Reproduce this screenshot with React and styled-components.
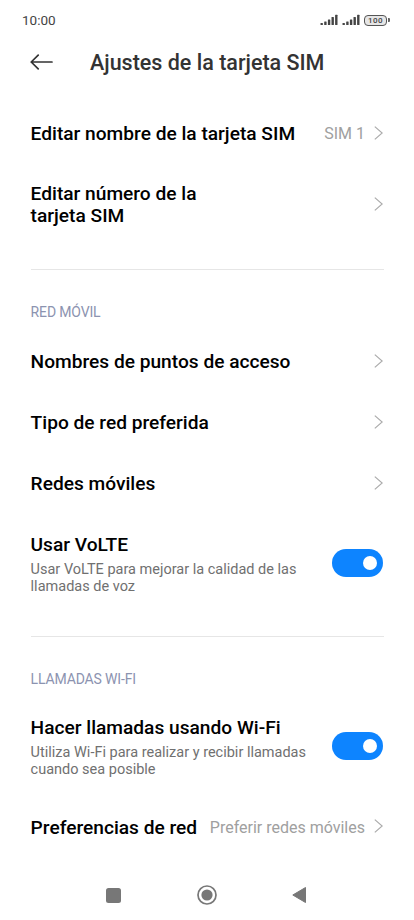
import React from 'react';
import styled, { createGlobalStyle } from 'styled-components';

const GlobalStyle = createGlobalStyle`
  * {
    box-sizing: border-box;
  }

  body {
    margin: 0;
    background: #fff;
    font-family: Roboto, sans-serif;
    color: #000;
  }
`;

const Screen = styled.div`
  width: 414px;
  height: 920px;
  overflow: hidden;
  display: flex;
  flex-direction: column;
`;

const StatusBar = styled.div`
  height: 40px;
  padding: 0 24px 0 22px;
  display: flex;
  align-items: center;
  justify-content: space-between;

  font-size: 13.5px;
  color: #444;
`;

const StatusIcons = styled.div`
  display: flex;
  align-items: center;
`;

const Signal = styled.svg`
  margin-right: 4px;
`;

const Battery = styled.div`
  width: 23px;
  height: 11px;
  display: flex;
  align-items: center;
  justify-content: center;

  border: 1px solid #555;
  border-radius: 4px;
  background: #e6e6e6;

  font-size: 8px;
  line-height: 9px;
  font-weight: 500;
  letter-spacing: 0.5px;
`;

const BatteryTip = styled.div`
  width: 2px;
  height: 4px;
  margin-left: 1px;
  border-radius: 0 1px 1px 0;
  background: #666;
`;

const Header = styled.header`
  height: 46px;
  padding: 0 0 2px 30px;
  display: flex;
  align-items: center;

  h1 {
    margin: 2px 0 0 37px;
    font-size: 21.5px;
    line-height: 26px;
    font-weight: 500;
    color: #333;
  }
`;

const Group = styled.section`
  margin: 0 30px 0 30.6px;
  padding-top: ${props => props.$top}px;
  height: ${props => props.$height}px;
  border-bottom: ${props => (props.$last ? '0' : '1px solid #e6e6e6')};
`;

const GroupTitle = styled.h2`
  margin: 0 0 10px;
  font-size: 14px;
  line-height: 16px;
  font-weight: 400;
  letter-spacing: -0.15px;
  color: #8c93b0;
`;

const Row = styled.div`
  height: ${props => props.$height || 61.3}px;
  padding-right: 1px;
  display: flex;
  align-items: center;
  justify-content: space-between;
`;

const Label = styled.div`
  margin-top: 2.4px;
  font-size: 19.15px;
  line-height: 22px;
  font-weight: 500;
  white-space: pre;
`;

const Summary = styled.div`
  margin-top: 5px;
  font-size: 14.5px;
  line-height: 17px;
  color: #707070;
  white-space: pre;
`;

const Value = styled.div`
  display: flex;
  align-items: center;
  gap: 9px;
  font-size: 16px;
  color: #a0a0a0;
  white-space: nowrap;

  span {
    padding-top: 2px;
  }
`;

const Toggle = styled.div`
  width: 51px;
  height: 28px;
  padding: 7px 6.5px;
  flex: none;
  display: flex;
  justify-content: flex-end;

  border-radius: 14px;
  background: #0d84ff;

  span {
    width: 14px;
    height: 14px;
    border-radius: 50%;
    background: #fff;
  }
`;

const NavBar = styled.nav`
  margin-top: auto;
  height: 50px;
  padding: 0 107px 0 106px;
  display: flex;
  align-items: center;
  justify-content: space-between;
`;

const Chevron = () => (
  <svg width="9" height="14" viewBox="0 0 9 14" fill="none" stroke="#aaa" strokeWidth="1.2">
    <path d="M.8 .6L8.2 7L.8 13.4" />
  </svg>
);

const SignalBars = () => (
  <Signal width="18" height="12" viewBox="0 0 18 12" fill="#444">
    <rect x=".5" y="9" width="2.4" height="2" rx=".5" />
    <rect x="4.2" y="7.5" width="2.4" height="3.5" rx=".5" />
    <rect x="7.9" y="5.5" width="2.4" height="5.5" rx=".5" />
    <rect x="11.5" y="3" width="2.4" height="8" rx=".5" />
    <rect x="15.1" y=".8" width="2.4" height="10.2" rx=".5" />
  </Signal>
);

const SettingRow = ({ label, summary, value, height, toggle }) => (
  <Row $height={height}>
    <div>
      <Label>{label}</Label>
      {summary && <Summary>{summary}</Summary>}
    </div>
    {toggle ? (
      <Toggle>
        <span />
      </Toggle>
    ) : (
      <Value>
        {value && <span>{value}</span>}
        <Chevron />
      </Value>
    )}
  </Row>
);

export default () => (
  <Screen>
    <GlobalStyle />
    <StatusBar>
      <span>10:00</span>
      <StatusIcons>
        <SignalBars />
        <SignalBars />
        <Battery>100</Battery>
        <BatteryTip />
      </StatusIcons>
    </StatusBar>
    <Header>
      <svg width="23" height="16" viewBox="0 0 23 16" fill="none" stroke="#333" strokeWidth="1.7" strokeLinecap="round" strokeLinejoin="round">
        <path d="M22 8H1.2M8.2 1.2L1.2 8l7 6.8" />
      </svg>
      <h1>Ajustes de la tarjeta SIM</h1>
    </Header>
    <Group $top={16} $height={184}>
      <SettingRow label="Editar nombre de la tarjeta SIM" value="SIM 1" />
      <SettingRow label={'Editar número de la\ntarjeta SIM'} height={82} />
    </Group>
    <Group $top={34} $height={367}>
      <GroupTitle>RED MÓVIL</GroupTitle>
      <SettingRow label="Nombres de puntos de acceso" />
      <SettingRow label="Tipo de red preferida" />
      <SettingRow label="Redes móviles" />
      <SettingRow
        label="Usar VoLTE"
        summary={'Usar VoLTE para mejorar la calidad de las\nllamadas de voz'}
        height={99}
        toggle
      />
    </Group>
    <Group $top={34} $height={230} $last>
      <GroupTitle>LLAMADAS WI-FI</GroupTitle>
      <SettingRow
        label="Hacer llamadas usando Wi-Fi"
        summary={'Utiliza Wi-Fi para realizar y recibir llamadas\ncuando sea posible'}
        height={98.8}
        toggle
      />
      <SettingRow label="Preferencias de red" value="Preferir redes móviles" />
    </Group>
    <NavBar>
      <svg width="15" height="15" viewBox="0 0 15 15">
        <rect width="15" height="15" rx="2.5" fill="#777" />
      </svg>
      <svg width="20" height="20" viewBox="0 0 20 20">
        <circle cx="10" cy="10" r="9" fill="none" stroke="#777" strokeWidth="1.7" />
        <circle cx="10" cy="10" r="5.6" fill="#777" />
      </svg>
      <svg width="15" height="18" viewBox="0 0 15 18">
        <path d="M13.5 1.5v15L.8 9z" fill="#777" stroke="#777" strokeLinejoin="round" />
      </svg>
    </NavBar>
  </Screen>
);
